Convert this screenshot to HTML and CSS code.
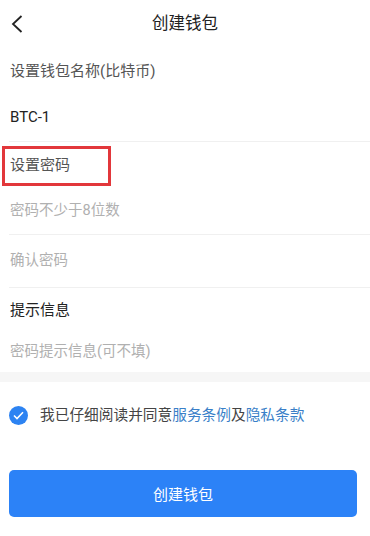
FILE: index.html
```html
<!DOCTYPE html>
<html lang="zh-CN">
<head>
<meta charset="utf-8">
<title>创建钱包</title>
<link rel="stylesheet" href="styles.css">
</head>
<body>
<div class="page">
  <header class="header">
    <span class="back">
      <svg width="12" height="18" viewBox="0 0 12 18"><path d="M10.5 1 L2 9 L10.5 17" fill="none" stroke="#222" stroke-width="1.8"/></svg>
    </span>
    <h1 class="title">创建钱包</h1>
  </header>

  <div class="form">
    <div class="row label-row r1"><span class="label">设置钱包名称(比特币)</span></div>
    <div class="row input-row r2 bordered"><span class="value">BTC-1</span></div>
    <div class="row label-row r3 marked"><span class="label">设置密码</span><span class="mark"></span></div>
    <div class="row input-row r4 bordered"><span class="placeholder">密码不少于8位数</span></div>
    <div class="row input-row r5 bordered"><span class="placeholder">确认密码</span></div>
    <div class="row label-row r6"><span class="label dark">提示信息</span></div>
    <div class="row input-row r7"><span class="placeholder">密码提示信息(可不填)</span></div>
  </div>

  <div class="band"></div>

  <div class="agree">
    <span class="check">
      <svg width="11" height="9" viewBox="0 0 11 9"><path d="M1 4.5 L4 7.5 L10 1.2" fill="none" stroke="#fff" stroke-width="1.6"/></svg>
    </span>
    <span class="agree-text">我已仔细阅读并同意<a class="link">服务条例</a>及<a class="link">隐私条款</a></span>
  </div>

  <div class="actions">
    <button class="btn">创建钱包</button>
  </div>
</div>
</body>
</html>
```
FILE: styles.css
```css
* { box-sizing: border-box; margin: 0; padding: 0; }
html, body { background: #fff; }
body {
  width: 370px;
  height: 536px;
  overflow: hidden;
  font-family: Roboto, "Noto Sans CJK SC", sans-serif;
  color: #222;
}
.page { display: flex; flex-direction: column; }

.header {
  position: relative;
  height: 48px;
  display: flex;
  align-items: center;
  justify-content: center;
}
.back {
  position: absolute;
  left: 11px;
  top: 15px;
  display: flex;
}
.title {
  font-size: 16.5px;
  font-weight: 400;
  color: #222;
  line-height: 1;
}

.form { display: flex; flex-direction: column; }
.row {
  display: flex;
  align-items: center;
  padding-left: 10px;
  font-size: 15px;
  line-height: 1;
}
.bordered { border-bottom: 1px solid #f0f0f0; margin-left: 9px; padding-left: 1px; }
.r1 { height: 46px; }
.r2 { height: 48px; }
.r3 { height: 46px; position: relative; }
.r4 { height: 47px; }
.r5 { height: 53px; }
.r6 { height: 44px; }
.r7 { height: 40px; }

.label { color: #555; }
.label.dark { color: #222; }
.value { color: #222; }
.placeholder { color: #b0b0b0; font-size: 14.5px; }

.mark {
  position: absolute;
  left: 2px;
  top: 4px;
  width: 109px;
  height: 40px;
  border: 3px solid #e2373b;
}

.band { height: 10px; background: #f6f6f6; }

.agree {
  height: 66px;
  display: flex;
  align-items: center;
  padding-left: 9px;
  gap: 12px;
}
.check {
  width: 19px;
  height: 19px;
  border-radius: 50%;
  background: #2d83f2;
  display: flex;
  align-items: center;
  justify-content: center;
}
.agree-text { font-size: 14.7px; color: #444; line-height: 1; }
.link { color: #3a7fc8; text-decoration: none; }

.actions { padding: 22px 13px 0 9px; }
.btn {
  width: 100%;
  height: 47px;
  border: none;
  border-radius: 5px;
  background: #2c82f7;
  color: #fff;
  font-family: Roboto, "Noto Sans CJK SC", sans-serif;
  font-size: 15px;
}
```
